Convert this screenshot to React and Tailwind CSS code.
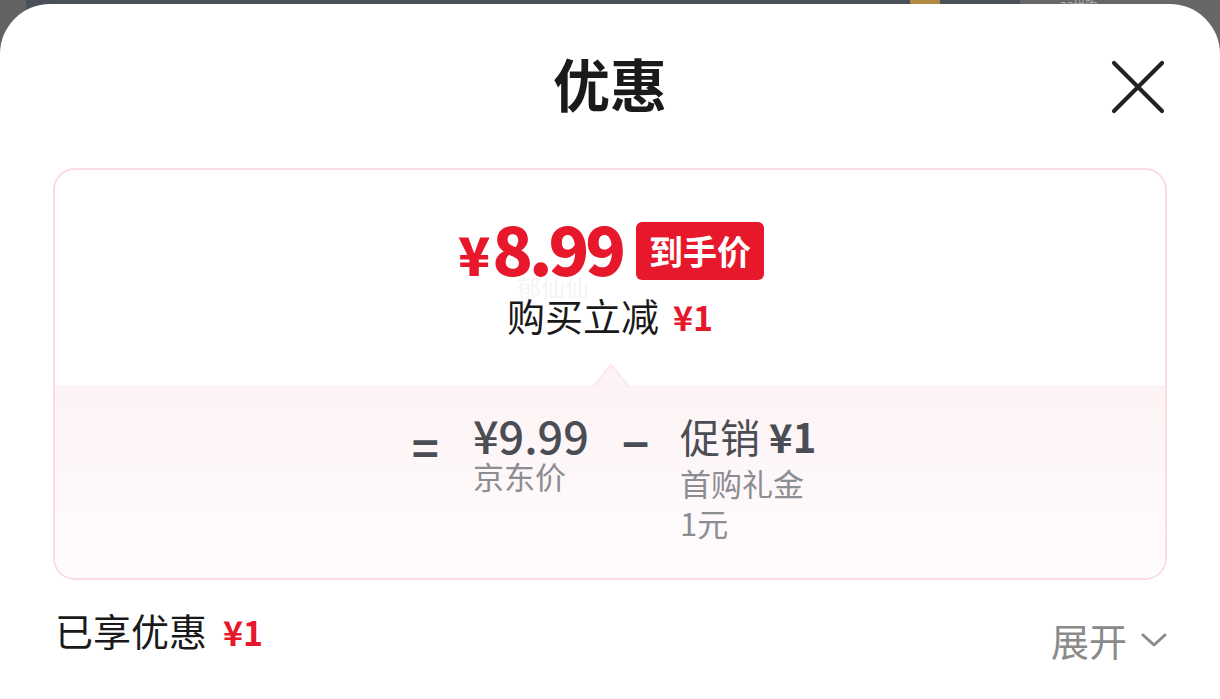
const cjk = { fontFamily: '"Noto Sans CJK SC", "Noto Sans", sans-serif' };

function CloseIcon() {
  return (
    <svg width="54" height="54" viewBox="0 0 54 54" className="text-[#222]">
      <path
        d="M3 3 L51 51 M51 3 L3 51"
        stroke="currentColor"
        strokeWidth="4.2"
        strokeLinecap="round"
        fill="none"
      />
    </svg>
  );
}

function Chevron() {
  return (
    <svg width="26" height="16" viewBox="0 0 26 16" className="text-[#8a8a8a]">
      <path
        d="M2 3 L13 13 L24 3"
        stroke="currentColor"
        strokeWidth="3"
        strokeLinecap="round"
        strokeLinejoin="round"
        fill="none"
      />
    </svg>
  );
}

export default function App() {
  return (
    <div
      className="relative w-[1220px] h-[699px] overflow-hidden bg-[#4b5058]"
      style={cjk}
    >
      {/* backdrop peeking above the sheet */}
      <div className="absolute inset-x-0 top-0 flex h-[60px]">
        <div className="w-[26px] bg-[#626262]" />
        <div className="flex-1 bg-[#4b5058]" />
        <div className="w-[30px] bg-[#b08a40]" />
        <div className="w-[80px] bg-[#4b5058]" />
        <div className="w-[200px] bg-[#676767] pl-[40px] text-[12px] leading-[12px] text-[#b5b5b5]">
          33拼购
        </div>
      </div>

      <div className="absolute inset-x-0 top-[4px] bottom-0 rounded-t-[50px] bg-white">
        {/* header */}
        <div className="relative pt-[50px]">
          <h1 className="text-center text-[57px] leading-[57px] font-bold text-[#1a1a1a]">
            优惠
          </h1>
          <div className="absolute right-[55px] top-[56px]">
            <CloseIcon />
          </div>
        </div>

        {/* price card */}
        <div className="mx-[53px] mt-[57px] h-[412px] rounded-[22px] border-2 border-[#f9dde3] overflow-hidden flex flex-col">
          <div className="relative h-[216px] flex flex-col items-center pt-[48px]">
            <div className="flex items-center gap-[14px] pl-[2px]">
              <div className="flex items-baseline font-black text-[#e8182c]">
                <span className="text-[53px] leading-[60px] mr-[2px]">¥</span>
                <span className="text-[67px] leading-[58px] tracking-[-4px]">8.99</span>
              </div>
              <span className="rounded-[6px] bg-[#e8182c] px-[13px] h-[58px] flex items-center text-[34px] font-bold text-white">
                到手价
              </span>
            </div>
            <span className="absolute top-[104px] left-[462px] text-[24px] leading-[26px] text-[#f5f5f5]">
              郁仙仙
            </span>
            <div className="relative mt-[10px] flex items-baseline gap-[14px]">
              <span className="text-[38px] leading-[44px] text-[#1a1a1a]">购买立减</span>
              <span className="text-[34px] leading-[44px] font-bold text-[#e8182c]">¥1</span>
            </div>
            {/* notch */}
            <svg
              className="absolute bottom-[-1px] left-[537px]"
              width="38"
              height="24"
              viewBox="0 0 38 24"
            >
              <path d="M1 23.5 L19 1.5 L37 23.5" fill="#fdf3f5" stroke="#fbe6eb" strokeWidth="1.5" />
            </svg>
          </div>
          <div className="flex-1 border-t border-[#fbe9ed] bg-gradient-to-b from-[#fdf3f5] to-[#fffcfd] flex justify-center pt-[22px] pl-[8px]">
            <span className="mt-[22px] text-[46px] leading-[30px] font-bold text-[#4b4d54]">=</span>
            <div className="ml-[34px] flex flex-col">
              <span className="text-[45px] leading-[52px] font-medium text-[#4b4d54]">¥9.99</span>
              <span className="text-[31px] leading-[30px] text-[#8b8d93]">京东价</span>
            </div>
            <span className="ml-[33px] mt-[18px] text-[46px] leading-[30px] font-bold text-[#4b4d54]">−</span>
            <div className="ml-[31px] flex flex-col">
              <span className="text-[40px] leading-[54px] text-[#4b4d54]">
                促销 <span className="font-bold">¥1</span>
              </span>
              <span className="text-[31px] leading-[40px] text-[#8b8d93]">首购礼金</span>
              <span className="text-[31px] leading-[40px] text-[#8b8d93]">1元</span>
            </div>
          </div>
        </div>

        {/* footer */}
        <div className="mx-[55px] mt-[26px] flex items-start justify-between">
          <div className="flex items-baseline gap-[16px]">
            <span className="text-[38px] leading-[48px] text-[#1a1a1a]">已享优惠</span>
            <span className="text-[34px] leading-[48px] font-bold text-[#e8182c]">¥1</span>
          </div>
          <div className="mt-[10px] mr-[-2px] flex items-center gap-[14px]">
            <span className="text-[38px] leading-[48px] text-[#8a8a8a]">展开</span>
            <Chevron />
          </div>
        </div>
      </div>
    </div>
  );
}
